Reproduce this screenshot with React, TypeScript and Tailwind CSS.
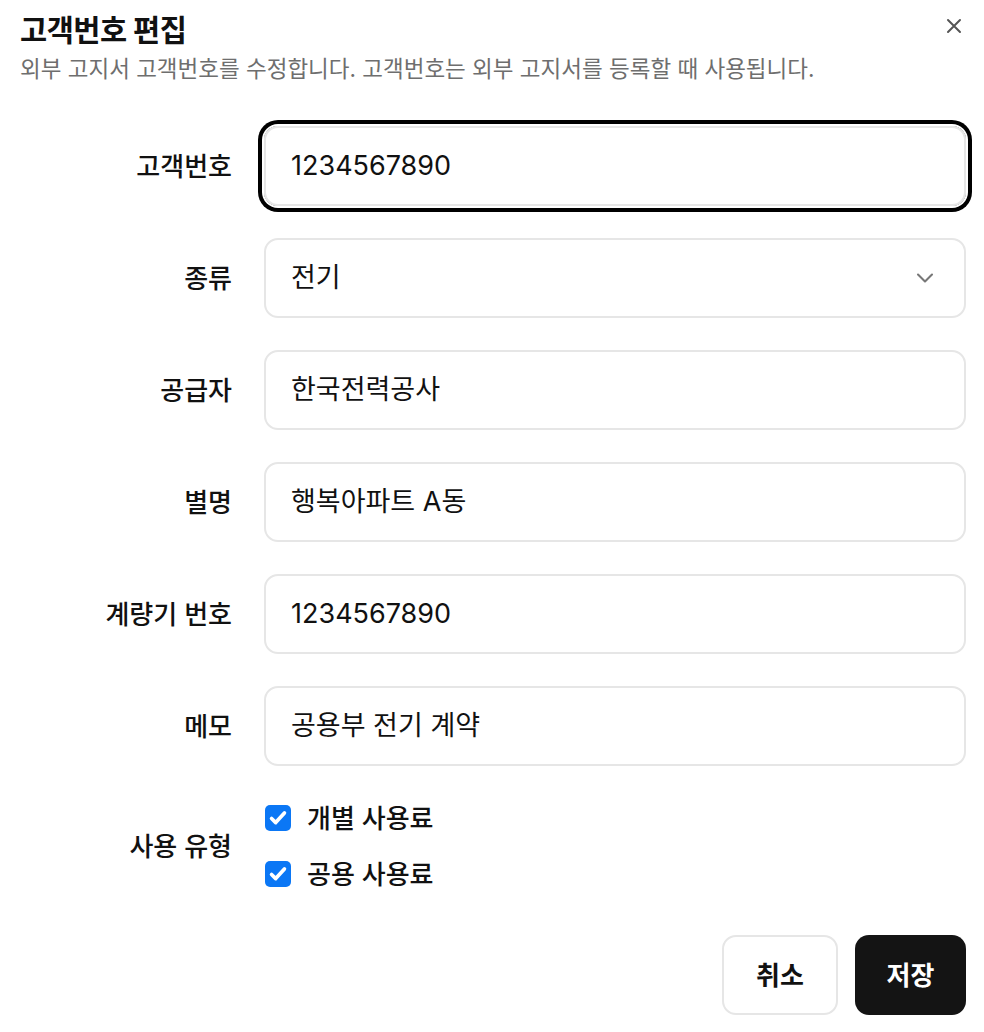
const font = "font-['Inter','Noto_Sans_CJK_KR',sans-serif]"

const rows = [
  { label: '종류', value: '전기', select: true },
  { label: '공급자', value: '한국전력공사' },
  { label: '별명', value: '행복아파트 A동' },
  { label: '계량기 번호', value: '1234567890' },
  { label: '메모', value: '공용부 전기 계약' },
]

function Check({ label }: { label: string }) {
  return (
    <label className="flex h-[28px] items-center gap-4">
      <span className="flex h-[26px] w-[26px] items-center justify-center rounded-[5px] bg-[#0b77f5]">
        <svg viewBox="0 0 24 24" className="h-[22px] w-[22px]" fill="none" stroke="white" strokeWidth="4" strokeLinecap="round" strokeLinejoin="round">
          <path d="M5 12.5l4.5 4.5L19 6.5" />
        </svg>
      </span>
      <span className="text-[26px] font-medium text-[#111]">{label}</span>
    </label>
  )
}

export default function App() {
  return (
    <div className={`${font} relative min-h-[1032px] w-[984px] bg-white pl-5 pr-[18px] text-[#111]`}>
      <button className="absolute right-[18px] top-[14px] flex h-[24px] w-[24px] items-center justify-center text-[#555]">
        <svg viewBox="0 0 24 24" className="h-[24px] w-[24px]" fill="none" stroke="currentColor" strokeWidth="2" strokeLinecap="round">
          <path d="M6 6l12 12M18 6L6 18" />
        </svg>
      </button>

      <div className="pt-[11px]">
        <h1 className="text-[29.5px] font-bold leading-[38px] tracking-[-0.5px]">고객번호 편집</h1>
        <p className="mt-[5px] text-[22.5px] leading-[30px] text-[#6e6e6e]">
          외부 고지서 고객번호를 수정합니다. 고객번호는 외부 고지서를 등록할 때 사용됩니다.
        </p>
      </div>

      <div className="mt-[42px] flex flex-col gap-8">
        <div className="flex items-center gap-8">
          <span className="w-[212px] shrink-0 text-right text-[26px] font-medium">고객번호</span>
          <div className="flex h-[80px] flex-1 items-center rounded-[14px] border-2 border-[#e6e6e6] px-[25px] text-[27px] ring-4 ring-black ring-offset-2">
            1234567890
          </div>
        </div>
        {rows.map((r) => (
          <div key={r.label} className="flex items-center gap-8">
            <span className="w-[212px] shrink-0 text-right text-[26px] font-medium">{r.label}</span>
            <div className="flex h-[80px] flex-1 items-center justify-between rounded-[14px] border-2 border-[#e6e6e6] px-[25px] text-[27px]">
              <span>{r.value}</span>
              {r.select && (
                <svg viewBox="0 0 24 24" className="h-[28px] w-[28px] text-[#777]" fill="none" stroke="currentColor" strokeWidth="1.8" strokeLinecap="round" strokeLinejoin="round">
                  <path d="M6 9l6 6 6-6" />
                </svg>
              )}
            </div>
          </div>
        ))}
        <div className="flex items-center gap-8">
          <span className="w-[212px] shrink-0 text-right text-[26px] font-medium">사용 유형</span>
          <div className="flex flex-col gap-[28px] py-[6px] pl-[1px]">
            <Check label="개별 사용료" />
            <Check label="공용 사용료" />
          </div>
        </div>
      </div>

      <div className="mt-[41px] flex justify-end gap-[17px]">
        <button className="h-[80px] w-[116px] rounded-[14px] border-2 border-[#e6e6e6] bg-white text-[26px] font-semibold">
          취소
        </button>
        <button className="h-[80px] w-[111px] rounded-[14px] bg-[#141414] text-[26px] font-semibold text-white">
          저장
        </button>
      </div>
    </div>
  )
}
